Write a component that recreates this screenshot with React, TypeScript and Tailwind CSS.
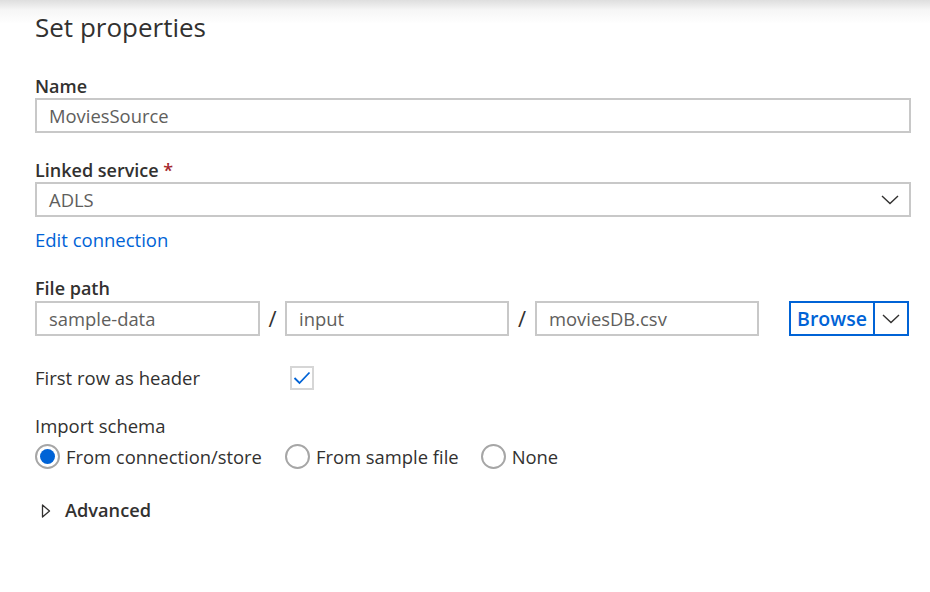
import React from "react";

const font = { fontFamily: '"Open Sans", "Noto Sans", sans-serif' };

function Chevron() {
  return (
    <svg width="18" height="10" viewBox="0 0 18 10" fill="none">
      <path d="M1 1 L9 8.5 L17 1" stroke="#323130" strokeWidth="1.4" />
    </svg>
  );
}

function TextBox({ value, className }: { value: string; className: string }) {
  return (
    <div
      className={`h-[35px] border-2 border-[#c8c8c8] flex items-center pl-[12px] text-[18.4px] text-[#605e5c] ${className}`}
    >
      {value}
    </div>
  );
}

function Radio({ checked, label }: { checked?: boolean; label: string }) {
  return (
    <div className="flex items-center gap-[6px]">
      <div className="w-[25px] h-[25px] rounded-full border-2 border-[#a6a6a6] flex items-center justify-center">
        {checked && <div className="w-[15px] h-[15px] rounded-full bg-[#0063d6]" />}
      </div>
      <span className="text-[18.4px] text-[#323130]">{label}</span>
    </div>
  );
}

export default function App() {
  return (
    <div
      className="w-[930px] h-[592px] bg-[linear-gradient(to_bottom,#dedede_0px,#f6f6f6_10px,#ffffff_24px)] pl-[35px] pr-[19px] pt-[11px] text-[#323130]"
      style={font}
    >
      <div className="text-[26px] leading-[32px] text-[#323130]">Set properties</div>

      <div className="mt-[32px] text-[18px] leading-[22px] font-semibold">Name</div>
      <TextBox value="MoviesSource" className="mt-[1px] w-[876px]" />

      <div className="mt-[26px] text-[18px] leading-[22px] font-semibold">
        Linked service <span className="text-[#a4262c]">*</span>
      </div>
      <div className="mt-[1px] w-[876px] h-[35px] border-2 border-[#c8c8c8] flex items-center justify-between pl-[12px] pr-[10px] text-[18.4px] text-[#605e5c]">
        <span>ADLS</span>
        <Chevron />
      </div>

      <div className="mt-[12px] text-[18.5px] leading-[22px] text-[#0063d6]">Edit connection</div>

      <div className="mt-[26px] text-[18px] leading-[22px] font-semibold">File path</div>
      <div className="mt-[2px] flex items-center">
        <TextBox value="sample-data" className="w-[225px]" />
        <span className="w-[25px] text-center text-[22px] text-[#323130]">/</span>
        <TextBox value="input" className="w-[224px]" />
        <span className="w-[26px] text-center text-[22px] text-[#323130]">/</span>
        <TextBox value="moviesDB.csv" className="w-[224px]" />
        <div className="ml-[30px] h-[35px] w-[120px] border-2 border-[#0063d6] flex">
          <div className="flex-1 flex items-center justify-center text-[19.5px] font-semibold text-[#0063d6] border-r-2 border-[#0063d6]">
            Browse
          </div>
          <div className="w-[32px] flex items-center justify-center">
            <Chevron />
          </div>
        </div>
      </div>

      <div className="mt-[30px] h-[24px] flex items-center">
        <span className="w-[255px] text-[18.5px]">First row as header</span>
        <div className="w-[24px] h-[24px] border-2 border-[#d6d6d6] flex items-center justify-center">
          <svg width="18" height="14" viewBox="0 0 18 14" fill="none">
            <path d="M1.5 7 L6.5 12 L16.5 1.5" stroke="#0063d6" strokeWidth="1.8" />
          </svg>
        </div>
      </div>

      <div className="mt-[25px] text-[18.5px] leading-[22px]">Import schema</div>
      <div className="mt-[6px] flex items-center">
        <Radio checked label="From connection/store" />
        <div className="ml-[23px]">
          <Radio label="From sample file" />
        </div>
        <div className="ml-[22px]">
          <Radio label="None" />
        </div>
      </div>

      <div className="mt-[29px] flex items-center h-[22px]">
        <svg width="10" height="14" viewBox="0 0 10 14" fill="none" className="ml-[6px]">
          <path d="M1.5 1 L8.5 7 L1.5 13 Z" stroke="#323130" strokeWidth="1.3" strokeLinejoin="round" />
        </svg>
        <span className="ml-[14px] text-[18.2px] font-semibold">Advanced</span>
      </div>
    </div>
  );
}
